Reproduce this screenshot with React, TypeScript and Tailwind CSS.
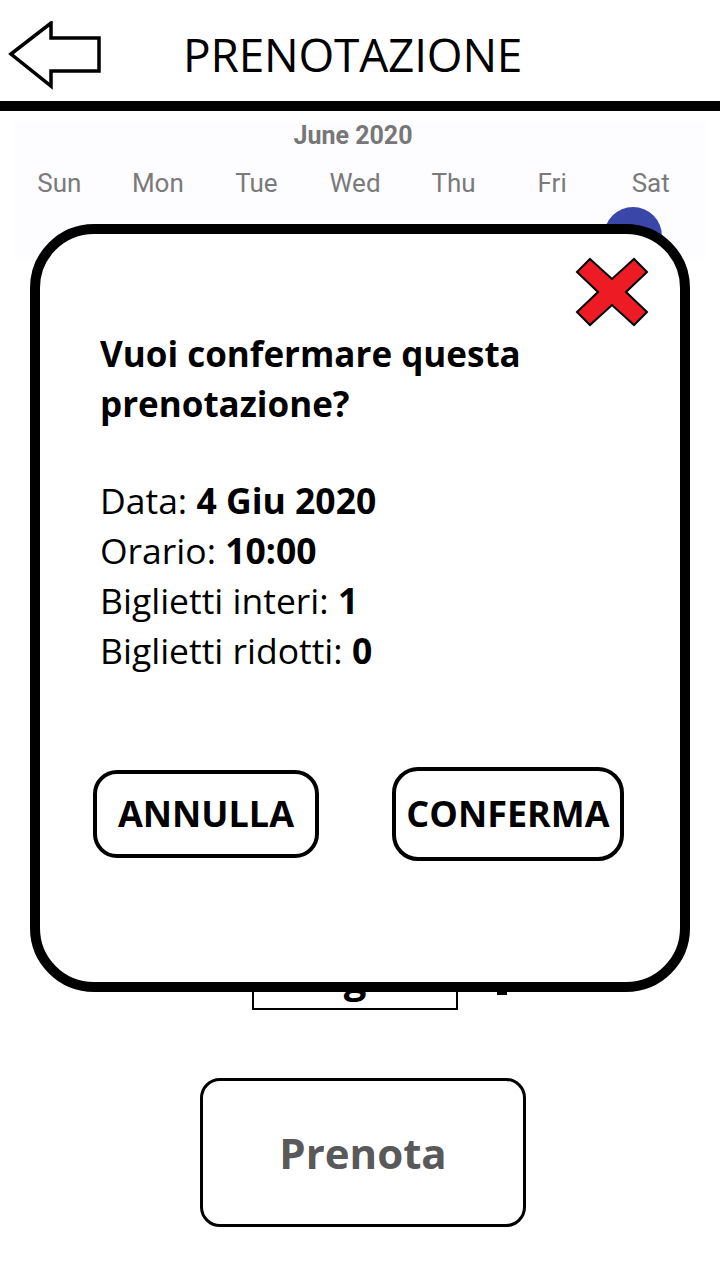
import React from "react";

const days = ["Sun", "Mon", "Tue", "Wed", "Thu", "Fri", "Sat"];

const details = [
  { label: "Data:", value: "4 Giu 2020" },
  { label: "Orario:", value: "10:00" },
  { label: "Biglietti interi:", value: "1" },
  { label: "Biglietti ridotti:", value: "0" },
];

function BackArrow() {
  return (
    <svg width="110" height="70" viewBox="0 0 110 70" className="block">
      <polygon
        points="3,33 43,2 43,17 91,17 91,50 43,50 43,65"
        fill="white"
        stroke="black"
        strokeWidth="3.5"
        strokeLinejoin="miter"
      />
    </svg>
  );
}

function RedCross() {
  return (
    <svg width="74" height="70" viewBox="0 0 74 70">
      <polygon
        points="15,2 37,22 59,2 72,15 51,35 72,55 59,68 37,48 15,68 2,55 23,35 2,15"
        fill="#ed1c24"
        stroke="black"
        strokeWidth="2"
        strokeLinejoin="miter"
      />
    </svg>
  );
}

export default function App() {
  return (
    <div className="relative w-[720px] h-[1280px] overflow-hidden bg-white font-['Open_Sans','Noto_Sans',sans-serif]">
      <header className="flex items-center h-[101px]">
        <div className="pl-[8px] pt-[10px]">
          <BackArrow />
        </div>
        <h1 className="ml-[65px] mt-[6px] text-[46px] font-normal tracking-[-0.2px] leading-none text-black">
          PRENOTAZIONE
        </h1>
      </header>
      <div className="h-[10px] bg-black" />

      <section className="mx-[15px] mt-[10px] h-[140px] bg-[#fdfcff] font-['Roboto',sans-serif]">
        <div className="text-center text-[25px] font-bold text-[#777777] leading-[30px] pr-[14px]">
          June 2020
        </div>
        <div className="grid grid-cols-7 mt-[17px] -ml-[5px] w-[690px]">
          {days.map((d) => (
            <div key={d} className="text-center text-[26px] text-[#7a7a7a] leading-[30px]">
              {d}
            </div>
          ))}
        </div>
        <div className="grid grid-cols-7 -ml-[5px] w-[690px] mt-[9px]">
          {days.map((d) => (
            <div key={d} className="flex justify-center">
              {d === "Sat" && (
                <div className="w-[58px] h-[58px] rounded-full bg-[#3a46a8] -ml-[36px]" />
              )}
            </div>
          ))}
        </div>
      </section>

      <div className="flex flex-col items-center mt-[699px]">
        <div className="relative -ml-[10px] w-[206px] h-[50px] pb-[13px] border-2 border-black flex items-end justify-center">
          <span className="text-[40px] font-bold leading-[34px]">g</span>
          <span className="absolute -right-[51px] bottom-[13px] w-[10px] h-[6px] bg-black" />
        </div>
        <button className="mt-[68px] ml-[6px] w-[326px] h-[149px] border-[3px] border-black rounded-[20px] text-[42px] font-bold text-[#595959]">
          Prenota
        </button>
      </div>

      <div className="absolute left-[30px] top-[224px] w-[660px] h-[768px] border-[10px] border-black rounded-[64px] bg-white flex flex-col">
        <div className="flex justify-end pr-[31px] pt-[23px]">
          <RedCross />
        </div>
        <h2 className="mt-[2px] pl-[60px] text-[35px] font-bold leading-[50px] text-black">
          Vuoi confermare questa
          <br />
          prenotazione?
        </h2>
        <div className="mt-[46px] pl-[60px] text-[35.5px] leading-[50px] text-black">
          {details.map((d) => (
            <div key={d.label}>
              {d.label} <span className="font-bold">{d.value}</span>
            </div>
          ))}
        </div>
        <div className="flex items-center mt-[92px]">
          <button className="ml-[53px] w-[226px] h-[88px] border-[4px] border-black rounded-[24px] text-[36px] font-bold text-black">
            ANNULLA
          </button>
          <button className="ml-[73px] w-[232px] h-[94px] border-[4px] border-black rounded-[26px] text-[36px] font-bold text-black">
            CONFERMA
          </button>
        </div>
      </div>
    </div>
  );
}
